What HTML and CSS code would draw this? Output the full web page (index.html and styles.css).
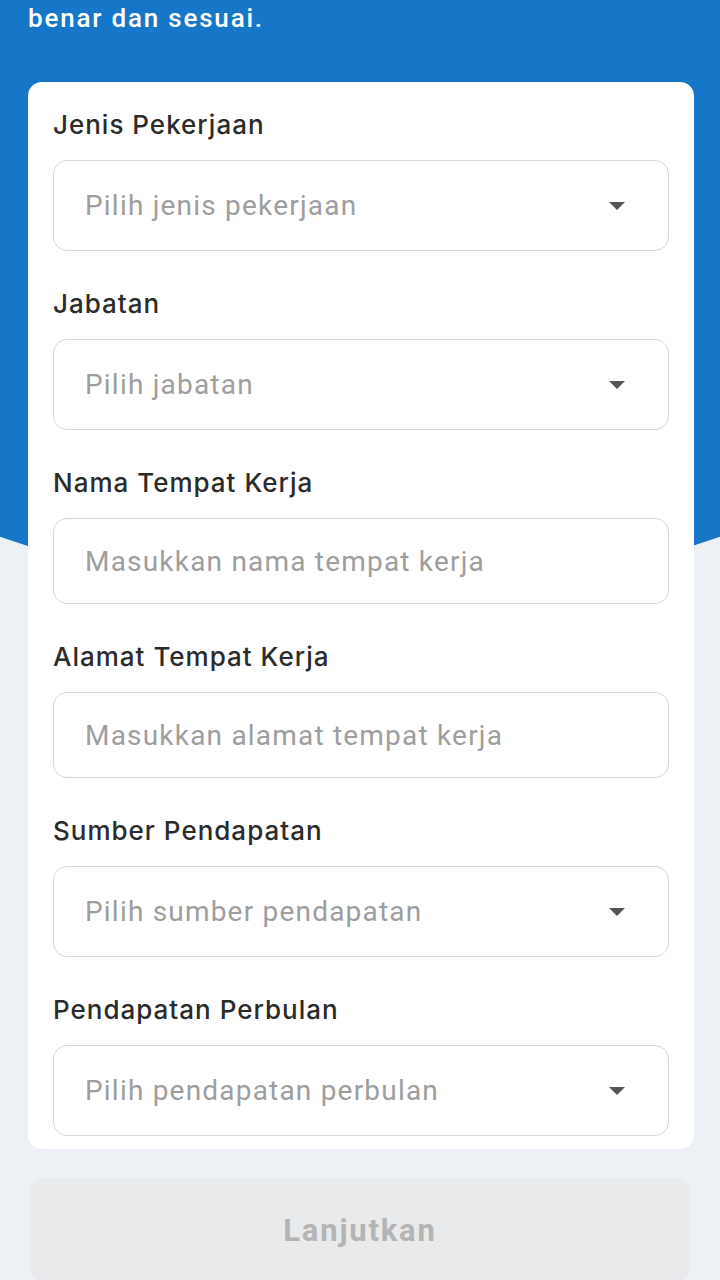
FILE: index.html
```html
<!DOCTYPE html>
<html lang="id">
<head>
<meta charset="UTF-8">
<meta name="viewport" content="width=device-width, initial-scale=1.0">
<title>Data Pekerjaan</title>
<link rel="stylesheet" href="styles.css">
</head>
<body>

<div class="page">
  <p class="intro">benar dan sesuai.</p>

  <div class="card">
    <div class="form-group">
      <label>Jenis Pekerjaan</label>
      <div class="select">
        <span>Pilih jenis pekerjaan</span>
        <svg class="caret" width="16" height="8" viewBox="0 0 16 8"><path d="M0 0h16L8 8z"/></svg>
      </div>
    </div>
    <div class="form-group">
      <label>Jabatan</label>
      <div class="select">
        <span>Pilih jabatan</span>
        <svg class="caret" width="16" height="8" viewBox="0 0 16 8"><path d="M0 0h16L8 8z"/></svg>
      </div>
    </div>
    <div class="form-group">
      <label for="namaKerja">Nama Tempat Kerja</label>
      <input type="text" id="namaKerja" placeholder="Masukkan nama tempat kerja">
    </div>
    <div class="form-group">
      <label for="alamatKerja">Alamat Tempat Kerja</label>
      <input type="text" id="alamatKerja" placeholder="Masukkan alamat tempat kerja">
    </div>
    <div class="form-group">
      <label>Sumber Pendapatan</label>
      <div class="select">
        <span>Pilih sumber pendapatan</span>
        <svg class="caret" width="16" height="8" viewBox="0 0 16 8"><path d="M0 0h16L8 8z"/></svg>
      </div>
    </div>
    <div class="form-group">
      <label>Pendapatan Perbulan</label>
      <div class="select">
        <span>Pilih pendapatan perbulan</span>
        <svg class="caret" width="16" height="8" viewBox="0 0 16 8"><path d="M0 0h16L8 8z"/></svg>
      </div>
    </div>
  </div>

  <button class="next" disabled>Lanjutkan</button>
</div>

</body>
</html>
```

FILE: styles.css
```css
body {
  margin: 0;
  font-family: Roboto, "Liberation Sans", sans-serif;
  background-color: #edf1f5;
  overflow: hidden;
}
.page {
  position: relative;
  width: 720px;
  height: 1280px;
  overflow: hidden;
}
/* blue curved header behind the card */
.page::before {
  content: "";
  position: absolute;
  left: -440px;
  top: -514px;
  width: 1600px;
  height: 1110px;
  border-radius: 50%;
  background-color: #1677c9;
  z-index: 0;
}
.intro {
  position: relative;
  margin: 0;
  padding: 1px 28px 0;
  color: #fff;
  font-size: 26px;
  line-height: 34px;
  font-weight: 500;
  letter-spacing: 1.8px;
}
.card {
  position: relative;
  margin: 47px 26px 0 28px;
  padding: 28px 25px 13px;
  background-color: #fff;
  border-radius: 14px;
}
.form-group {
  margin-bottom: 38px;
}
.form-group:last-child {
  margin-bottom: 0;
}
label {
  display: block;
  font-family: Inter, Roboto, sans-serif;
  font-size: 26px;
  line-height: 30px;
  font-weight: 500;
  letter-spacing: 1px;
  color: #2b2b2b;
  margin-bottom: 20px;
}
.select,
input[type="text"] {
  display: flex;
  align-items: center;
  justify-content: space-between;
  width: 100%;
  height: 91px;
  padding: 0 43px 0 31px;
  border: 1.5px solid #d8d8d8;
  border-radius: 14px;
  box-sizing: border-box;
  font-family: inherit;
  font-size: 28px;
  letter-spacing: 1.2px;
  color: #9e9e9e;
  background-color: #fff;
}
input[type="text"] {
  height: 86px;
  outline: none;
}
input::placeholder {
  color: #9e9e9e;
}
.caret {
  fill: #555;
}
.next {
  position: relative;
  display: block;
  width: 660px;
  height: 104px;
  margin: 29px 30px 0;
  border: none;
  border-radius: 14px;
  background-color: #e8eaec;
  color: #b4b4b4;
  font-family: inherit;
  font-size: 31px;
  font-weight: 700;
  letter-spacing: 1.8px;
}
```
